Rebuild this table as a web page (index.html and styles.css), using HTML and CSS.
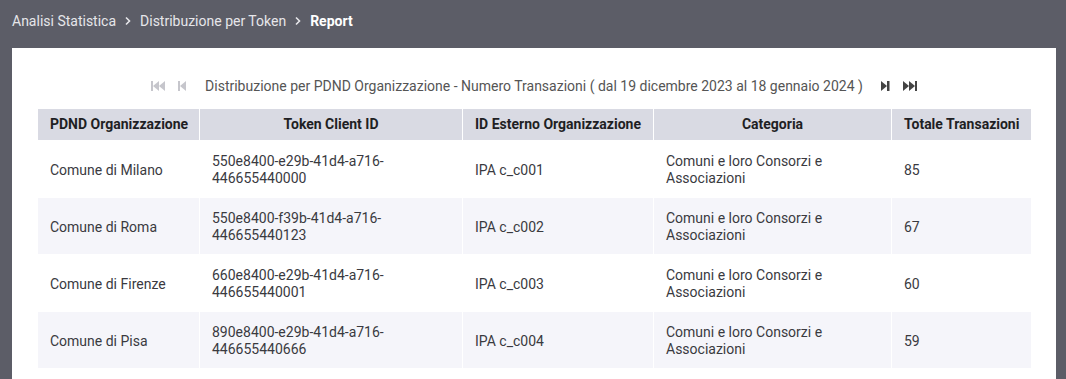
FILE: index.html
```html
<!DOCTYPE html>
<html lang="it">
<head>
<meta charset="utf-8">
<title>Report</title>
<link rel="stylesheet" href="styles.css">
</head>
<body>
<nav class="breadcrumb">
  <span class="crumb">Analisi Statistica</span>
  <svg class="chev" width="8" height="10" viewBox="0 0 8 10"><path d="M2 1.5 L5.5 5 L2 8.5" fill="none" stroke="#e6e6ea" stroke-width="1.6"/></svg>
  <span class="crumb">Distribuzione per Token</span>
  <svg class="chev" width="8" height="10" viewBox="0 0 8 10"><path d="M2 1.5 L5.5 5 L2 8.5" fill="none" stroke="#e6e6ea" stroke-width="1.6"/></svg>
  <span class="crumb current">Report</span>
</nav>
<main class="card">
  <div class="title-row">
    <span class="pbtn disabled"><svg width="14" height="10" viewBox="0 0 14 10"><rect x="0" y="0" width="2" height="10"/><path d="M2 5 L8 0 V10 Z"/><path d="M8 5 L14 0 V10 Z"/></svg></span>
    <span class="pbtn disabled"><svg width="8" height="10" viewBox="0 0 8 10"><rect x="0" y="0" width="2" height="10"/><path d="M2 5 L8 0 V10 Z"/></svg></span>
    <span class="title">Distribuzione per PDND Organizzazione - Numero Transazioni ( dal 19 dicembre 2023 al 18 gennaio 2024 )</span>
    <span class="pbtn"><svg width="9" height="10" viewBox="0 0 9 10"><path d="M0 0 L6 5 L0 10 Z"/><rect x="6" y="0" width="2.5" height="10"/></svg></span>
    <span class="pbtn"><svg width="14" height="10" viewBox="0 0 14 10"><path d="M0 0 L6 5 L0 10 Z"/><path d="M6 0 L12 5 L6 10 Z"/><rect x="12" y="0" width="2" height="10"/></svg></span>
  </div>
  <table class="report">
    <colgroup>
      <col class="c1"><col class="c2"><col class="c3"><col class="c4"><col class="c5">
    </colgroup>
    <thead>
      <tr>
        <th>PDND Organizzazione</th>
        <th>Token Client ID</th>
        <th>ID Esterno Organizzazione</th>
        <th>Categoria</th>
        <th>Totale Transazioni</th>
      </tr>
    </thead>
    <tbody>
      <tr>
        <td>Comune di Milano</td>
        <td>550e8400-e29b-41d4-a716-<br>446655440000</td>
        <td>IPA c_c001</td>
        <td>Comuni e loro Consorzi e<br>Associazioni</td>
        <td>85</td>
      </tr>
      <tr>
        <td>Comune di Roma</td>
        <td>550e8400-f39b-41d4-a716-<br>446655440123</td>
        <td>IPA c_c002</td>
        <td>Comuni e loro Consorzi e<br>Associazioni</td>
        <td>67</td>
      </tr>
      <tr>
        <td>Comune di Firenze</td>
        <td>660e8400-e29b-41d4-a716-<br>446655440001</td>
        <td>IPA c_c003</td>
        <td>Comuni e loro Consorzi e<br>Associazioni</td>
        <td>60</td>
      </tr>
      <tr>
        <td>Comune di Pisa</td>
        <td>890e8400-e29b-41d4-a716-<br>446655440666</td>
        <td>IPA c_c004</td>
        <td>Comuni e loro Consorzi e<br>Associazioni</td>
        <td>59</td>
      </tr>
    </tbody>
  </table>
</main>
</body>
</html>
```

FILE: styles.css
```css
html, body {
  margin: 0;
  padding: 0;
}
body {
  background: #5c5d67;
  font-family: Roboto, "Liberation Sans", Arial, sans-serif;
  font-size: 14px;
  overflow: hidden;
}
.breadcrumb {
  display: flex;
  align-items: center;
  gap: 8px;
  padding: 12px 12px 18px;
  line-height: 18px;
  color: #e6e6ea;
}
.crumb.current {
  color: #ffffff;
  font-weight: 700;
}
.chev {
  display: block;
}
.card {
  background: #ffffff;
  margin: 0 10px 0 12px;
  padding: 25px 25px 25px;
}
.title-row {
  display: flex;
  justify-content: center;
  align-items: center;
  height: 26px;
  margin-bottom: 10px;
}
.pbtn {
  width: 24px;
  height: 24px;
  display: flex;
  align-items: center;
  justify-content: center;
  fill: #444444;
}
.pbtn.disabled {
  fill: #c6c6cc;
}
.title {
  color: #555555;
  margin: 0 11px;
  white-space: nowrap;
}
.report {
  width: 100%;
  table-layout: fixed;
  border-collapse: collapse;
}
.c1 { width: 162px; }
.c2 { width: 263px; }
.c3 { width: 191px; }
.c4 { width: 238px; }
.c5 { width: 140px; }
.report th {
  background: #d9dae3;
  color: #1f1f24;
  font-weight: 700;
  text-align: center;
  line-height: 17px;
  padding: 7px 12px;
  border: 1px solid #ffffff;
  border-top: 0;
  white-space: nowrap;
}
.report td {
  color: #3a3a3f;
  line-height: 17px;
  padding: 12px 12px 10px;
  border: 1px solid #ffffff;
  text-align: left;
  vertical-align: middle;
}
.report tbody tr:nth-child(even) td {
  background: #f5f5fa;
}
```
